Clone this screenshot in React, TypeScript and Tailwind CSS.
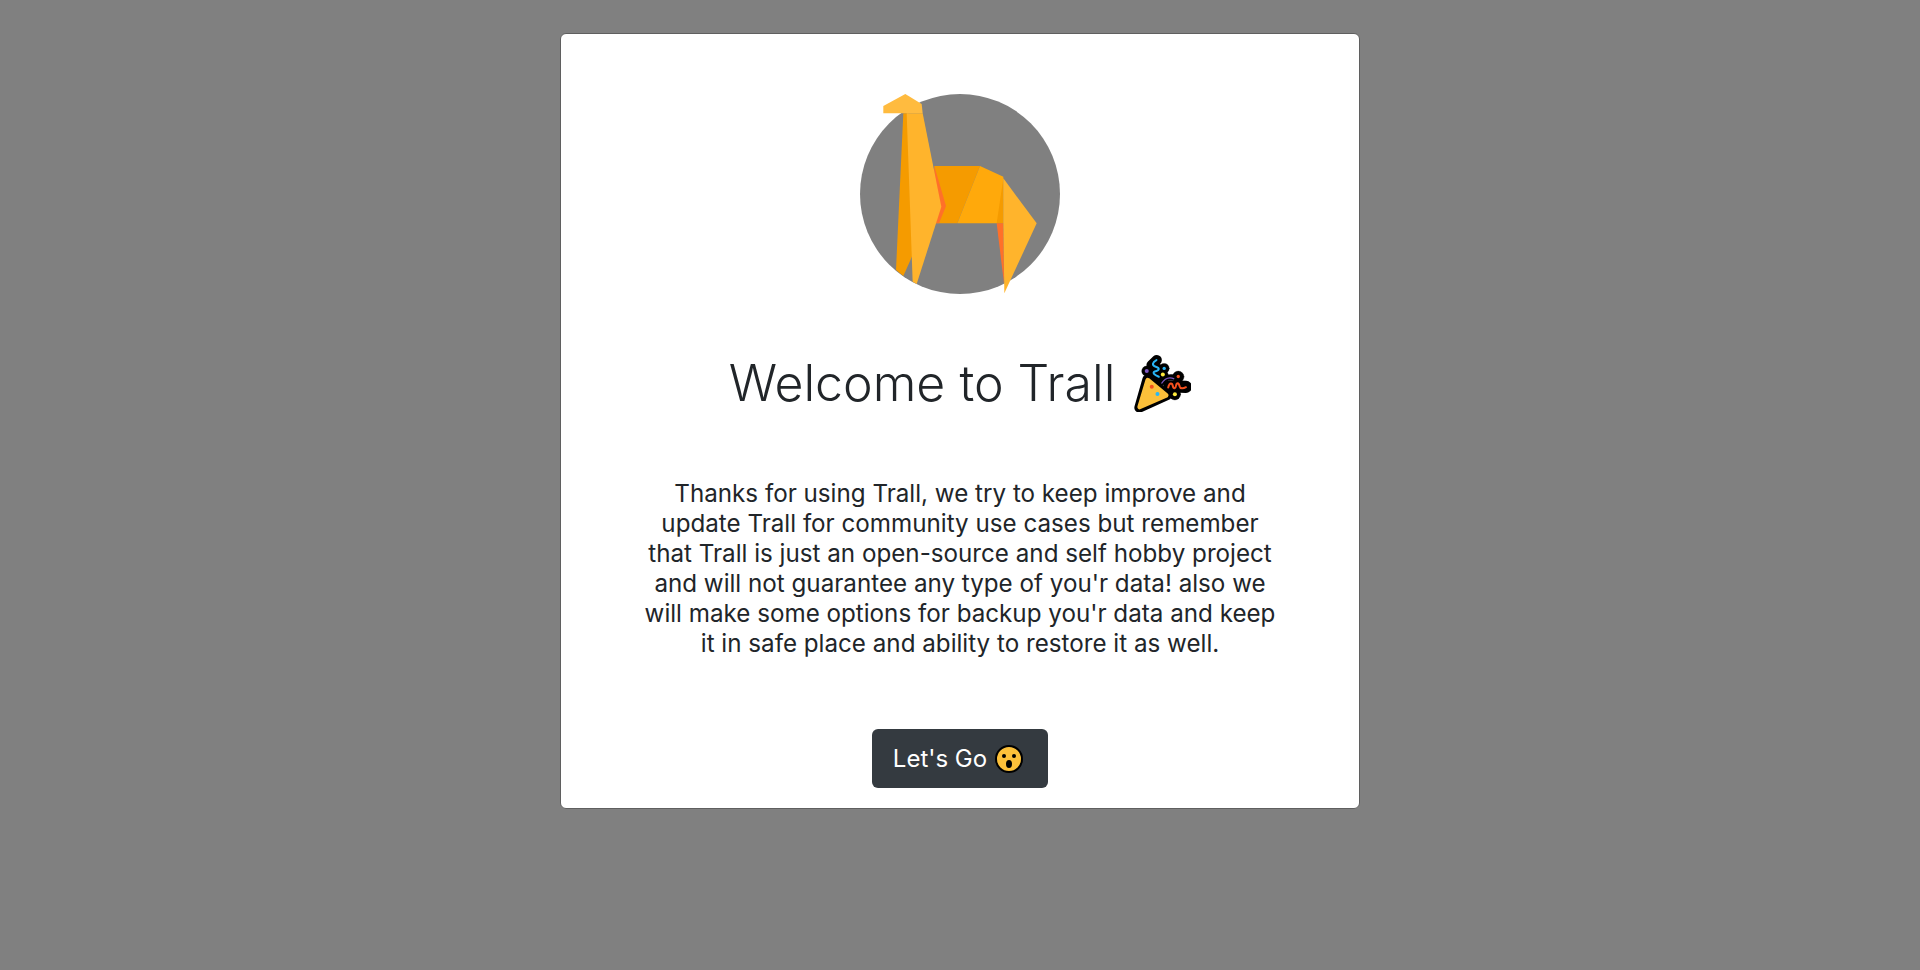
import React from 'react';

const font = { fontFamily: '"Inter", "Noto Sans", sans-serif' };

function Logo() {
  return (
    <svg viewBox="0 0 720 660" className="block w-[240px] h-[220px]">
      <circle cx="360" cy="342" r="300" fill="#808080" />
      <polygon points="283,258 420,258 352,430 285,430" fill="#f59b00" />
      <polygon points="420,258 490,290 490,430 352,430" fill="#ffa90b" />
      <polygon points="490,295 470,430 490,430" fill="#f59b00" />
      <polygon points="470,430 490,430 492,610" fill="#ff7029" />
      <polygon points="490,295 590,430 493,640 490,430" fill="#ffb42c" />
      <polygon points="283,258 318,378 297,430 285,430" fill="#ff7029" />
      <polygon points="190,100 205,100 218,525 190,588 168,570" fill="#f59b00" />
      <polygon points="200,100 248,100 304,380 230,612 218,605" fill="#ffb42c" />
      <polygon points="130,78 196,42 245,72 248,100 130,100" fill="#ffbb3f" />
    </svg>
  );
}

function PartyPopper() {
  return (
    <svg viewBox="90 45 170 170" className="block h-[57px] w-[57px]">
      <g fill="#000" stroke="#000" strokeLinecap="round" strokeLinejoin="round">
        <path d="M130 118 L188 165 L106 202 Z" strokeWidth="30" />
        <path d="M158 60 L142 75 L165 88 L148 100 L165 118" fill="none" strokeWidth="30" />
        <circle cx="128" cy="93" r="15" />
        <circle cx="180" cy="85" r="15" />
        <circle cx="177" cy="105" r="15" />
        <path d="M195 138 L245 140" fill="none" strokeWidth="36" />
        <circle cx="222" cy="110" r="17" />
        <circle cx="212" cy="162" r="17" />
        <path d="M172 128 C182 112 198 108 214 114" fill="none" strokeWidth="18" />
      </g>
      <path d="M131 120 L186 165 L107 200 Z" fill="#fcc03a" stroke="#fcc03a" strokeWidth="14" strokeLinejoin="round" />
      <circle cx="143" cy="140" r="6" fill="#f4511e" />
      <circle cx="160" cy="161" r="6" fill="#29b6f6" />
      <path
        d="M157 60 C145 66 142 76 155 80 C168 84 166 92 152 94 C144 98 150 104 164 110"
        fill="none"
        stroke="#29b6f6"
        strokeWidth="6"
        strokeLinecap="round"
      />
      <path
        d="M192 142 C196 126 204 128 206 138 C208 148 214 146 216 134 C218 126 224 128 226 138 C228 146 236 146 245 141"
        fill="none"
        stroke="#f4511e"
        strokeWidth="6"
        strokeLinecap="round"
      />
      <path d="M172 130 C182 114 196 110 210 116" fill="none" stroke="#7e57c2" strokeWidth="4" />
      <circle cx="128" cy="93" r="6" fill="#7e57c2" />
      <circle cx="180" cy="85" r="5" fill="#29b6f6" />
      <circle cx="176" cy="103" r="6" fill="#ffeb3b" />
      <circle cx="222" cy="109" r="5" fill="#f4511e" />
      <circle cx="212" cy="162" r="6" fill="#ffeb3b" />
    </svg>
  );
}

function WowFace() {
  return (
    <svg viewBox="0 0 28 28" className="block h-[28px] w-[28px]">
      <circle cx="14" cy="14" r="13" fill="#fcc03a" stroke="#000" strokeWidth="2" />
      <circle cx="9" cy="11" r="2" fill="#000" />
      <circle cx="19" cy="11" r="2" fill="#000" />
      <ellipse cx="14" cy="19" rx="3" ry="4" fill="#000" />
    </svg>
  );
}

export default function App() {
  return (
    <div className="flex min-h-screen flex-col items-center bg-[#808080] pt-[33px]" style={font}>
      <div className="flex h-[776px] w-[800px] flex-col items-center rounded-[6px] border border-[#5f5f5f] bg-white pt-[46px]">
        <Logo />
        <div className="mt-[51px] flex h-[64px] items-center gap-[19px] text-[50px] font-[350] text-[#212529]">
          <h1>Welcome to Trall</h1>
          <PartyPopper />
        </div>
        <p className="mt-[64px] text-center text-[24.2px] leading-[30px] text-[#212529]">
          Thanks for using Trall, we try to keep improve and
          <br />
          update Trall for community use cases but remember
          <br />
          that Trall is just an open-source and self hobby project
          <br />
          and will not guarantee any type of you'r data! also we
          <br />
          will make some options for backup you'r data and keep
          <br />
          it in safe place and ability to restore it as well.
        </p>
        <button className="mt-[70px] flex h-[59px] w-[176px] items-center justify-center gap-[8px] rounded-[6px] bg-[#343a40] pr-[4px] text-[24px] text-white">
          Let's Go
          <WowFace />
        </button>
      </div>
    </div>
  );
}
